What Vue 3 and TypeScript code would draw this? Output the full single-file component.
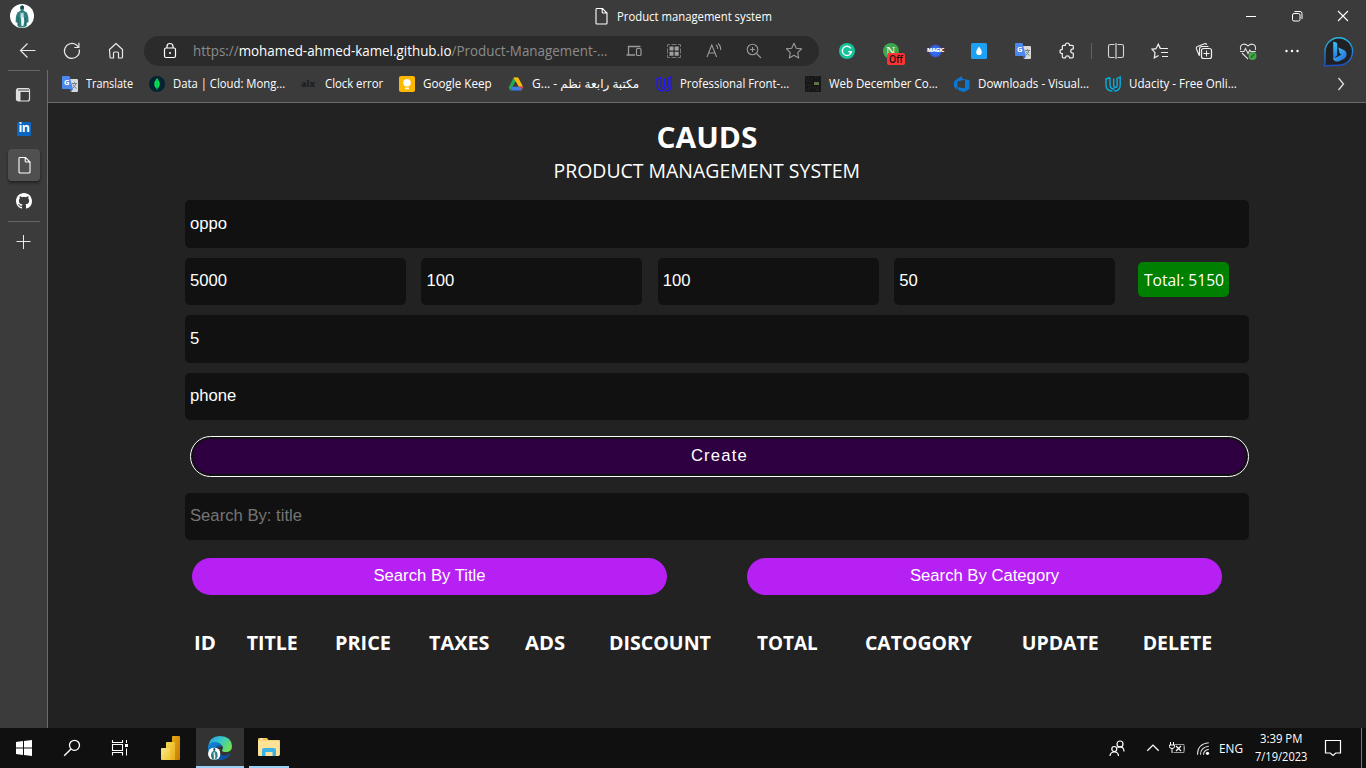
<script setup lang="ts">
import { computed, ref } from 'vue'
import type { Directive } from 'vue'

// Condenses or widens a label so that it takes exactly the given width.
const vFit: Directive<HTMLElement, number> = {
  mounted(el, binding) {
    const natural = el.offsetWidth
    if (natural > 0) el.style.transform = `scaleX(${binding.value / natural})`
  },
}

interface Bookmark { icon: string; label: string; width: number; ink: number; rtl?: boolean }

const bookmarks: Bookmark[] = [
  { icon: 'translate', label: 'Translate', width: 47, ink: 47 },
  { icon: 'mongo', label: 'Data | Cloud: Mong...', width: 112, ink: 112 },
  { icon: 'alx', label: 'Clock error', width: 58, ink: 58.5 },
  { icon: 'keep', label: 'Google Keep', width: 69, ink: 69 },
  { icon: 'drive', label: 'مكتبة رابعة نظم - G...\u200e', width: 108, ink: 107, rtl: true },
  { icon: 'udacity-blue', label: 'Professional Front-...', width: 109, ink: 109 },
  { icon: 'webdec', label: 'Web December Co...', width: 109, ink: 109 },
  { icon: 'azure', label: 'Downloads - Visual...', width: 111, ink: 111 },
  { icon: 'udacity-cyan', label: 'Udacity - Free Onli...', width: 108, ink: 108 },
]

// Lettering that sits on top of a logo.
const lettering: Record<string, string> = {
  norton: 'N',
  magic: 'MAGIC',
  alx: 'alx',
  translate: 'G',
  'translate-ext': 'G',
}

const navIcons = ['back', 'reload', 'home']
const addressIcons = ['devices', 'apps', 'read', 'zoom', 'star']
const extensions = ['grammarly', 'norton', 'magic', 'drop', 'translate-ext', 'puzzle']
const tools = ['split', 'favorites', 'collections', 'health', 'more']
const windowIcons = ['minimize', 'restore', 'close']

const title = ref('oppo')
const price = ref('5000')
const taxes = ref('100')
const ads = ref('100')
const discount = ref('50')
const count = ref('5')
const category = ref('phone')
const search = ref('')
const mode = ref<'title' | 'category'>('title')
const total = computed(() => +price.value + +taxes.value + +ads.value - +discount.value)

const headers: { label: string; width: number }[] = [
  { label: 'ID', width: 22 },
  { label: 'TITLE', width: 51 },
  { label: 'PRICE', width: 56 },
  { label: 'TAXES', width: 60 },
  { label: 'ADS', width: 40.5 },
  { label: 'DISCOUNT', width: 101.5 },
  { label: 'TOTAL', width: 61 },
  { label: 'CATOGORY', width: 106.5 },
  { label: 'UPDATE', width: 77 },
  { label: 'DELETE', width: 70 },
]
</script>

<template>
  <div class="screen">
    <svg class="sprite" width="0" height="0" aria-hidden="true">
      <defs>
        <linearGradient id="gBing" x1="0" y1="0" x2="1" y2="1"><stop offset="0" stop-color="#45cdf2" /><stop offset="1" stop-color="#1f62dc" /></linearGradient>
        <linearGradient id="gStem" x1="0" y1="0" x2="0" y2="1"><stop offset="0" stop-color="#3cc4f2" /><stop offset="1" stop-color="#2377e6" /></linearGradient>
        <linearGradient id="gRing" x1="0" y1="0" x2="0" y2="1"><stop offset="0" stop-color="#2bb6e4" /><stop offset="1" stop-color="#1d4fc4" /></linearGradient>
        <linearGradient id="gEdgeTop" x1="0" y1="0" x2="1" y2=".5"><stop offset="0" stop-color="#249be0" /><stop offset=".5" stop-color="#35c6d0" /><stop offset="1" stop-color="#6be05a" /></linearGradient>
        <linearGradient id="gEdgeLow" x1="0" y1="0" x2="1" y2="1"><stop offset="0" stop-color="#1389dc" /><stop offset="1" stop-color="#114a9a" /></linearGradient>
        <radialGradient id="gMagic"><stop offset="0" stop-color="#4063ff" /><stop offset=".65" stop-color="#296be8" /><stop offset="1" stop-color="#4b46b8" /></radialGradient>
        <linearGradient id="gBar1" x1="0" y1="0" x2="1" y2="1"><stop offset="0" stop-color="#e9aa12" /><stop offset="1" stop-color="#c27a04" /></linearGradient>
        <linearGradient id="gBar2" x1="0" y1="0" x2="1" y2="1"><stop offset="0" stop-color="#f8d94f" /><stop offset="1" stop-color="#e7ad1c" /></linearGradient>
        <linearGradient id="gBar3" x1="0" y1="0" x2="1" y2="1"><stop offset="0" stop-color="#fbe68a" /><stop offset="1" stop-color="#f1c733" /></linearGradient>
      </defs>

      <symbol id="avatar" viewBox="0 0 24 24">
        <circle cx="12" cy="12" r="12" fill="#fff" />
        <path d="M10.3 2.6q1.5-2 3.4-.6 1.2 2-.2 4.6l3.6 2.2q1.9 4.6 1.5 9.2l-1.9 1v3q-2.2 1.6-6 1.6-2.2-.4-3-1.6l.1-3-2.1-1q-.2-6.4 1.8-9.6l3.3-2q-1.100-2-.5-3.800z" fill="#327f80" />
        <path d="M10.600 8.200l1.300 1.300 1.500-1.300.3 4-1.700 6-1.500-5z" fill="#c7e0df" />
        <path d="M10.500 2.500q2-2 3.400.2l-.4 2.100-2.800.1z" fill="#16494c" />
        <path d="M8 13v9M15.500 14v7" fill="none" stroke="#205a5c" stroke-width=".7" />
        <path d="M11.200 20l.2-6 2.400-1.200.4 4.700-.8 4.500h-1.800z" fill="#eef6f5" />
      </symbol>

      <symbol id="page" viewBox="0 0 24 24">
        <path d="M7.500 4.500h6l4.500 4.500v10q0 1-1 1h-9q-1 0-1-1v-13.500q0-1 .5-1zM13.200 4.500v3.500q0 1 1 1h3.800" fill="none" stroke="#fff" stroke-width="1.100" />
      </symbol>
      <symbol id="minimize" viewBox="0 0 24 24"><path d="M7 12.500h10" stroke="#fff" /></symbol>
      <symbol id="restore" viewBox="0 0 24 24">
        <rect x="7.500" y="9.500" width="7.500" height="7.500" rx="1.500" fill="none" stroke="#fff" /><path d="M9.500 7.500h5.500q2 0 2 2v5.500" fill="none" stroke="#fff" />
      </symbol>
      <symbol id="close" viewBox="0 0 24 24"><path d="M7 7l10 10M17 7L7 17" stroke="#fff" stroke-width="1.100" /></symbol>

      <symbol id="back" viewBox="0 0 24 24"><path d="M19.500 11.500H4.500M11.500 4.500l-7 7 7 7" fill="none" stroke="#e8e8e8" stroke-width="1.200" /></symbol>
      <symbol id="reload" viewBox="0 0 24 24"><path d="M19.300 10.500A7.500 7.500 0 1 1 16.500 6l2.300 2.300M18.900 3.800v4.700h-4.700" fill="none" stroke="#e8e8e8" stroke-width="1.200" /></symbol>
      <symbol id="home" viewBox="0 0 24 24"><path d="M5.500 10.500l6.500-6 6.500 6v7.500q0 1-1 1h-3v-5q0-1-1-1h-3q-1 0-1 1v5h-2.500q-1 0-1-1z" fill="none" stroke="#e8e8e8" stroke-width="1.200" stroke-linejoin="round" /></symbol>
      <symbol id="lock" viewBox="0 0 24 24"><rect x="6.500" y="9" width="11" height="9.500" rx="1.500" fill="none" stroke="#fff" stroke-width="1.200" /><path d="M9 9V7.500q0-3 3-3t3 3V9" fill="none" stroke="#fff" stroke-width="1.200" /><circle cx="12" cy="14" r="1" fill="#fff" /></symbol>

      <symbol id="devices" viewBox="0 0 24 24"><path d="M18.500 7.500H6.500v8M4.500 16h8.500" fill="none" stroke="#9a9a9a" stroke-width="1.300" /><rect x="14.500" y="9.500" width="4.500" height="7" rx="1" fill="#2b2b2b" stroke="#9a9a9a" stroke-width="1.200" /></symbol>
      <symbol id="apps" viewBox="0 0 24 24">
        <path d="M8 5.500H5.500V8M16 5.500h2.500V8M8 18.500H5.500V16M16 18.500h2.500V16M9.500 5.500h5M9.500 18.500h5M5.500 9.500v5M18.500 9.500v5" fill="none" stroke="#777" /><path d="M7.500 7.500h4v4h-4zM12.700 7.500h4v4h-4zM7.500 12.700h4v4h-4zM12.700 12.700h4v4h-4z" fill="#a0a0a0" />
      </symbol>
      <symbol id="read" viewBox="0 0 24 24"><path d="M5 18L9.800 6l4.800 12M6.700 14h6.200M14 6q2 1.500 1.700 4M16 4.500q3 2.500 2.600 6.500" fill="none" stroke="#9a9a9a" stroke-width="1.100" /></symbol>
      <symbol id="zoom" viewBox="0 0 24 24"><circle cx="10.500" cy="10.500" r="5.300" fill="none" stroke="#9a9a9a" stroke-width="1.100" /><path d="M14.500 14.500l4.500 4.500M10.500 8v5M8 10.500h5" stroke="#9a9a9a" stroke-width="1.100" /></symbol>
      <symbol id="star" viewBox="0 0 24 24"><path d="M12 4.300l2.300 4.900 5.300.7-3.900 3.700 1 5.400-4.700-2.700L7.300 19l1-5.400-3.900-3.700 5.300-.7z" fill="none" stroke="#9a9a9a" stroke-width="1.100" stroke-linejoin="round" /></symbol>

      <symbol id="grammarly" viewBox="0 0 24 24"><circle cx="12" cy="12" r="8" fill="#15c39a" /><path d="M15.800 9.300A4.600 4.600 0 1 0 16.500 12.700h-3.300M14.700 14.800l1.800-2" fill="none" stroke="#fff" stroke-width="1.300" /></symbol>
      <symbol id="norton" viewBox="0 0 24 24"><circle cx="12" cy="12" r="8" fill="#3da74a" /></symbol>
      <symbol id="magic" viewBox="0 0 24 24"><circle cx="12.500" cy="12" r="6.500" fill="url(#gMagic)" /></symbol>
      <symbol id="drop" viewBox="0 0 24 24"><rect x="4" y="4" width="16" height="16" rx="1.500" fill="#1da1f5" /><path d="M12 7.500q2.800 3.500 2.800 5.800a2.800 2.800 0 0 1-5.600 0q0-2.300 2.800-5.800z" fill="#fff" /></symbol>
      <symbol id="translate" viewBox="0 0 16 16">
        <path d="M7 3h8q1 0 1 1v11q0 1-1 1H9z" fill="#d9d9d9" /><path d="M10 7.500h5M12.500 6v1.500M14 7.500q-.8 3-3.500 5M11 8.500q1.200 2.500 3.500 4" stroke="#71858c" fill="none" /><path d="M1 0h6.500l3.500 13H1q-1 0-1-1V1q0-1 1-1z" fill="#4d88ef" /><path d="M8 13h3l-2 3z" fill="#3569c8" />
      </symbol>
      <symbol id="translate-ext" viewBox="-4 -4 24 24"><use href="#translate" width="16" height="16" /></symbol>
      <symbol id="puzzle" viewBox="0 0 24 24"><path d="M7 7q0-1 1-1h2q.2-2.300 2.100-2.300T14.200 6H17q1 0 1 1v2.600q-2.600.2-2.600 2.200t2.600 2.300V17.500q0 1-1 1h-2.800q-.2-1.900-2-1.900t-2.100 1.900H8q-1 0-1-1v-3.200q-2.300-.2-2.300-2.200T7 10z" fill="none" stroke="#f0f0f0" stroke-width="1.200" transform="translate(.3 .3)" /></symbol>
      <symbol id="split" viewBox="0 0 24 24"><path d="M10.500 5.500H6.300q-1.800 0-1.800 1.800v9.400q0 1.800 1.800 1.800h4.200M13.500 5.500h4.200q1.800 0 1.800 1.800v9.400q0 1.800-1.800 1.800h-4.200" fill="none" stroke="#d8d8d8" stroke-width="1.100" /><path d="M12 4v16" stroke="#d8d8d8" stroke-width="1.200" /></symbol>
      <symbol id="favorites" viewBox="0 0 24 24"><path d="M12.500 9.500h-.3L10.300 5.200 8 9.700l-4 .6 3 3.300-.7 5.200 4.300-2.300M10.300 5.200l2.200 4.300h1.500M12.500 9.500h7.500M13 13.500h7M14 17.500h6" fill="none" stroke="#f0f0f0" stroke-width="1.200" /></symbol>
      <symbol id="collections" viewBox="0 0 24 24"><path d="M8 16.500l-1-.5-2.500-6q-.7-2 1-2.500l7-2.700q1.500-.5 2.300 1M7.500 16V10q0-2.500 2.500-2.500h6.500" fill="none" stroke="#f0f0f0" stroke-width="1.100" /><rect x="9.500" y="9.500" width="10" height="10" rx="2" fill="#3b3b3b" stroke="#f0f0f0" stroke-width="1.200" /><path d="M14.500 11.500v6M11.500 14.500h6" stroke="#f0f0f0" /></symbol>
      <symbol id="health" viewBox="0 0 24 24"><path d="M4.800 11q-1.300-4 1.700-5.500 3-1.200 5.500 1.500 2.500-2.700 5.500-1.500 3 1.500 1.700 5.500M4 12.500h4l1.500-3 2.500 5 1.800-3.500 1 1.500h5M6 14l6 6" fill="none" stroke="#e0e0e0" stroke-width="1.100" /><circle cx="16.500" cy="17" r="4" fill="#42a548" /><path d="M14.800 18.700l3.400-3.400" stroke="#1e5c25" stroke-width="1.200" /></symbol>
      <symbol id="more" viewBox="0 0 24 24"><circle cx="6.500" cy="12" r="1.200" fill="#fff" /><circle cx="12" cy="12" r="1.200" fill="#fff" /><circle cx="17.500" cy="12" r="1.200" fill="#fff" /></symbol>
      <symbol id="bing" viewBox="0 0 32 32"><path d="M1.200 29.700q1-2 .8-5V15.500A13.800 13.800 0 1 1 15.700 29.300q-7 0-14.500.4z" fill="#202124" stroke="url(#gRing)" stroke-width="1.400" /><path d="M10.200 5.500l3 1q1 .4 1 1.500V19.500l-4 3.500z" fill="url(#gStem)" /><path d="M15.300 11.500l5.700 2.500q3.200 2 2.500 5.500-1 3-3.500 4l-3.500 1.600q-2.500 1-4.600 0-2-1.100-1.700-3.100 2 .2 4-1l4.300-2.500-1.800-1z" fill="url(#gBing)" /></symbol>

      <symbol id="mongo" viewBox="0 0 16 16"><circle cx="8" cy="8" r="8" fill="#022331" /><path d="M8 2q3 3.500 2.700 7-.3 2.300-2.700 4-2.400-1.700-2.700-4Q5 5.500 8 2z" fill="#08e65a" /><path d="M8 4v10" stroke="#05a845" stroke-width=".8" /></symbol>
      <symbol id="alx" viewBox="0 0 16 16"></symbol>
      <symbol id="keep" viewBox="0 0 16 16"><rect width="16" height="16" rx="2" fill="#fdb900" /><circle cx="8" cy="6.800" r="3.800" fill="#fff" /><path d="M6 11.600h4v1.600H6z" fill="#fff" /></symbol>
      <symbol id="drive" viewBox="0 0 16 16"><path d="M5.500 1.500h4.300L4.200 11.300 2.200 14.500 .8 11.500z" fill="#25a851" /><path d="M6 1.500h4.200l5 9.500h-4.500L6 2.500z" fill="#fdb907" /><path d="M4.500 10.500h10.700l-1.800 4H2.500z" fill="#3f7de8" /><path d="M11 10.500h4.200l-1.500 3.500z" fill="#e64337" /><path d="M8 6l2.500 4.500h-5z" fill="#3b3b3b" /></symbol>
      <symbol id="udacity" viewBox="0 0 16 16"><path d="M5 1.500L1 3V9.500Q1 14.500 7.500 15.200M5 1.500V9q0 4 4.500 4M8.700 2.500v7q0 1.900 1.700 1.900t1.700-1.900v-7L15.200 1v8.500q0 5-6.200 5.700" fill="none" stroke="currentColor" stroke-width="1.350" /></symbol>
      <symbol id="udacity-blue" viewBox="0 0 16 16"><use href="#udacity" color="#2015ff" width="16" height="16" /></symbol>
      <symbol id="udacity-cyan" viewBox="0 0 16 16"><use href="#udacity" color="#02b3e4" width="16" height="16" /></symbol>
      <symbol id="webdec" viewBox="0 0 16 16"><rect width="16" height="16" fill="#171717" /><path d="M1 2h3M6 3h2M10 1h4M2 5h4M1 9h5M3 12h3M8 12h6M1 14h3M11 14h3" stroke="#353535" stroke-dasharray="1 1" /><path d="M9 7h5v2H9z" fill="#5d763a" /><path d="M9 6.500h5" stroke="#a6b98a" stroke-width=".5" /></symbol>
      <symbol id="azure" viewBox="0 0 16 16"><path d="M0 5.500L3.500 2.800 8 0v2.500l7.500 1.800V13L10 16l-5-1.500L2.500 11v3L0 10.500zM3.500 5.500v5.800l7.500 1V3.600z" fill="#0d78d4" fill-rule="evenodd" /></symbol>

      <symbol id="tabs" viewBox="0 0 24 24"><rect x="4.500" y="5.500" width="13" height="12.500" rx="2" fill="none" stroke="#e0e0e0" stroke-width="1.200" /><path d="M5 5.500h12v3.500H8.500v9H5z" fill="#e0e0e0" /><path d="M6 7h11" stroke="#3b3b3b" /></symbol>
      <symbol id="linkedin" viewBox="0 0 24 24"><rect x="5" y="5" width="14" height="14" rx="1" fill="#0a66c2" /></symbol>
      <symbol id="github" viewBox="0 0 16 16"><path fill="#fff" d="M8 0C3.580 0 0 3.580 0 8c0 3.540 2.290 6.530 5.470 7.590.4.070.55-.17.55-.38 0-.19-.01-.82-.01-1.490-2.010.37-2.530-.49-2.690-.94-.09-.23-.48-.94-.82-1.130-.28-.15-.68-.52-.01-.53.63-.01 1.080.58 1.230.82.72 1.210 1.870.87 2.330.66.07-.52.28-.87.51-1.070-1.780-.2-3.640-.89-3.640-3.950 0-.87.31-1.590.82-2.150-.08-.2-.36-1.020.08-2.120 0 0 .67-.21 2.200.82a7.600 7.600 0 0 1 4 0c1.530-1.040 2.200-.82 2.200-.82.44 1.100.16 1.920.08 2.120.51.56.82 1.270.82 2.150 0 3.070-1.870 3.750-3.650 3.950.29.25.54.73.54 1.480 0 1.070-.01 1.930-.01 2.200 0 .21.15.46.55.38A8.010 8.010 0 0 0 16 8c0-4.420-3.580-8-8-8z" /></symbol>
      <symbol id="plus" viewBox="0 0 24 24"><path d="M11.500 5v14M4.500 11.500h14" stroke="#e8e8e8" /></symbol>

      <symbol id="windows" viewBox="0 0 24 24"><path d="M4 6l7-.9v6.400H4zM12 5l8-1v7.500h-8zM4 12.500h7v6.400L4 18zM12 12.500h8V20l-8-1z" fill="#fff" /></symbol>
      <symbol id="find" viewBox="0 0 24 24"><circle cx="14.500" cy="9.300" r="5" fill="none" stroke="#fff" stroke-width="1.300" /><path d="M11 13l-6.800 6.800" stroke="#fff" stroke-width="1.400" /></symbol>
      <symbol id="taskview" viewBox="0 0 24 24"><path d="M4.500 4v2.500h10V4M4.500 19.500v-3h10v3" fill="none" stroke="#fff" stroke-width="1.100" /><path d="M4.500 8.500h10v6h-10z" fill="none" stroke="#fff" stroke-width="1.100" /><path d="M18.500 4v3M18.500 12.500v7" stroke="#fff" /><path d="M17 8h3v3h-3z" fill="#fff" /></symbol>
      <symbol id="powerbi" viewBox="0 0 24 24"><rect x="12" y="0" width="8" height="24" rx="1" fill="url(#gBar1)" /><path d="M7 6h7q1 0 1 1v17H6V7q0-1 1-1z" fill="url(#gBar2)" /><path d="M2 12h7q1 0 1 1v11H2q-1 0-1-1V13q0-1 1-1z" fill="url(#gBar3)" /></symbol>
      <symbol id="edge" viewBox="0 0 24 24">
        <path d="M0 11Q1.500 0 12 0q11.500.5 12 10 0 6-6 6-4.500 0-4-2 2-2 0-4.500Q8 4 0 11z" fill="url(#gEdgeTop)" />
        <path d="M0 11q1-5 6.500-5 6 0 7.500 4.500-4-1-4.500 2.500 0 5.500 6 7 4 0 7-2-4 6-10.500 6Q0 23 0 11z" fill="url(#gEdgeLow)" />
        <path d="M9.500 12q-1 5 4 7.500 5 1 8-2l.7.600Q18 24 11 22.500 5 18 7.300 11.500 10 8 13.500 10q-3.500-1-4 2z" fill="#0c53a6" />
        <use href="#avatar" x="0" y="11.500" width="12.500" height="12.500" />
      </symbol>
      <symbol id="explorer" viewBox="0 0 24 24"><path d="M2 3h8l1.500 2H22q1 0 1 1v14H1V4z" fill="#f5c451" /><path d="M1 5.500h21.500V20q0 1-1 1H2q-1 0-1-1z" fill="#fee298" /><path d="M5 21v-6q0-2 2-2h10q2 0 2 2v6h-3.500v-4h-7v4z" fill="#3bb1e5" /><path d="M3 4h3" stroke="#fff" /></symbol>
      <symbol id="people" viewBox="0 0 24 24"><circle cx="15" cy="8" r="3" fill="none" stroke="#fff" stroke-width="1.200" /><path d="M12.500 11.500q3-1.500 5.500.5 1 1.500 1 3.500" fill="none" stroke="#fff" stroke-width="1.200" /><circle cx="9.300" cy="13" r="2.500" fill="none" stroke="#fff" stroke-width="1.200" /><path d="M5 20q.3-4 4.300-4t4.200 4" fill="none" stroke="#fff" stroke-width="1.200" /></symbol>
      <symbol id="chevron-up" viewBox="0 0 24 24"><path d="M6.300 14.800l5.700-5.700 5.700 5.700" fill="none" stroke="#fff" stroke-width="1.300" /></symbol>
      <symbol id="battery" viewBox="0 0 24 24"><path d="M9.500 8.500h9.500v8H8.500M19.500 10.500v4" fill="none" stroke="#999" /><path d="M5.500 6v3M8.500 6v3M4.500 9h5v1.500q0 2-2.500 2t-2.500-2zM7 12.500v4.500" fill="none" stroke="#fff" /><path d="M11 10l5 5M16 10l-5 5" stroke="#fff" stroke-width="1.200" /></symbol>
      <symbol id="wifi" viewBox="0 0 24 24"><path d="M6.500 18Q6.500 7 17.800 6M9.500 18q0-7.500 8.300-8.500M12.500 18q0-4.500 5.300-5.500" fill="none" stroke="#ddd" stroke-width="1.100" transform="translate(0 .8)" /><circle cx="16.500" cy="17.300" r="1.600" fill="#fff" /></symbol>
      <symbol id="notice" viewBox="0 0 24 24"><path d="M4.500 4.500h15v12.500h-4.700L12 19.500 9.200 17H4.500z" fill="none" stroke="#fff" stroke-width="1.200" /></symbol>
      <symbol id="chevron-right" viewBox="0 0 24 24"><path d="M9.500 6l5 6-5 6" fill="none" stroke="#e0e0e0" stroke-width="1.300" /></symbol>
    </svg>

    <header class="titlebar">
      <div class="profile"><svg class="i24"><use href="#avatar" /></svg></div>
      <div class="tab-title">
        <svg class="i24"><use href="#page" /></svg>
        <span v-fit="154.5" class="fit">Product management system</span>
      </div>
      <div class="window-controls">
        <div v-for="icon in windowIcons" :key="icon" class="cell46"><svg class="i24"><use :href="`#${icon}`" /></svg></div>
      </div>
    </header>

    <div class="toolbar">
      <div v-for="icon in navIcons" :key="icon" class="cell44"><svg class="i24"><use :href="`#${icon}`" /></svg></div>
      <div class="address">
        <svg class="i24 lock"><use href="#lock" /></svg>
        <div class="url"><span v-fit="415" class="fit">https://<b>mohamed-ahmed-kamel.github.io</b>/Product-Management-...</span></div>
        <div v-for="icon in addressIcons" :key="icon" class="cell40"><svg class="i24"><use :href="`#${icon}`" /></svg></div>
      </div>
      <div v-for="icon in extensions" :key="icon" class="cell44 logo">
        <svg class="i24"><use :href="`#${icon}`" /></svg>
        <span v-if="lettering[icon]" class="lettering" :class="`on-${icon}`">{{ lettering[icon] }}</span>
        <span v-if="icon === 'norton'" class="badge"><span v-fit="14" class="fit">Off</span></span>
      </div>
      <i class="divider"></i>
      <div v-for="icon in tools" :key="icon" class="cell44"><svg class="i24"><use :href="`#${icon}`" /></svg></div>
      <div class="bing"><svg class="i32"><use href="#bing" /></svg></div>
    </div>

    <div class="body">
      <aside class="sidebar">
        <i class="rule"></i>
        <div class="side-cell tabs"><svg class="i24"><use href="#tabs" /></svg></div>
        <div class="side-cell logo"><svg class="i24"><use href="#linkedin" /></svg><span class="lettering on-linkedin">in</span></div>
        <div class="side-cell active"><svg class="i24"><use href="#page" /></svg></div>
        <div class="side-cell"><svg class="i16"><use href="#github" /></svg></div>
        <i class="rule second"></i>
        <div class="side-cell plus"><svg class="i24"><use href="#plus" /></svg></div>
      </aside>

      <div class="main">
        <nav class="bookmarks">
          <div v-for="mark in bookmarks" :key="mark.label" class="bookmark">
            <div class="logo">
              <svg class="i16"><use :href="`#${mark.icon}`" /></svg>
              <span v-if="lettering[mark.icon]" class="lettering" :class="`on-${mark.icon}`">{{ lettering[mark.icon] }}</span>
            </div>
            <div class="mark-label" :style="{ width: `${mark.width}px` }">
              <span v-fit="mark.ink" class="fit" :class="{ arabic: mark.rtl }" :dir="mark.rtl ? 'rtl' : 'ltr'">{{ mark.label }}</span>
            </div>
          </div>
          <svg class="i24 overflow"><use href="#chevron-right" /></svg>
        </nav>

        <main class="page">
          <div class="heading">
            <h1><span v-fit="101" class="fit">CAUDS</span></h1>
            <p><span v-fit="307" class="fit">PRODUCT MANAGEMENT SYSTEM</span></p>
          </div>

          <div class="form">
            <input v-model="title" class="field tall" placeholder="title" />
            <div class="price-row">
              <input v-model="price" class="field" placeholder="price" />
              <input v-model="taxes" class="field" placeholder="taxes" />
              <input v-model="ads" class="field" placeholder="ads" />
              <input v-model="discount" class="field" placeholder="discount" />
              <div class="total"><span v-fit="80" class="fit">Total: {{ total }}</span></div>
            </div>
            <input v-model="count" class="field tall" placeholder="count" />
            <input v-model="category" class="field" placeholder="category" />
            <button class="create">Create</button>
            <input v-model="search" class="field" :placeholder="`Search By: ${mode}`" />
            <div class="search-buttons">
              <button @click="mode = 'title'">Search By Title</button>
              <button @click="mode = 'category'">Search By Category</button>
            </div>
          </div>

          <div class="table-head">
            <div v-for="head in headers" :key="head.label"><span v-fit="head.width" class="fit">{{ head.label }}</span></div>
          </div>
        </main>
      </div>
    </div>

    <footer class="taskbar">
      <div class="task"><svg class="i24"><use href="#windows" /></svg></div>
      <div class="task"><svg class="i24"><use href="#find" /></svg></div>
      <div class="task"><svg class="i24"><use href="#taskview" /></svg></div>
      <div class="task powerbi"><svg class="i24"><use href="#powerbi" /></svg></div>
      <div class="task current"><svg class="i24"><use href="#edge" /></svg></div>
      <div class="task open"><svg class="i24"><use href="#explorer" /></svg></div>
      <div class="tray">
        <svg class="i24 people"><use href="#people" /></svg>
        <svg class="i24 up"><use href="#chevron-up" /></svg>
        <svg class="i24"><use href="#battery" /></svg>
        <svg class="i24 wifi"><use href="#wifi" /></svg>
        <div class="lang"><span v-fit="23.5" class="fit">ENG</span></div>
        <div class="clock">
          <div class="time"><span v-fit="42.5" class="fit">3:39 PM</span></div>
          <div class="date"><span v-fit="52.5" class="fit">7/19/2023</span></div>
        </div>
        <svg class="i24 notice"><use href="#notice" /></svg>
        <i class="show-desktop"></i>
      </div>
    </footer>
  </div>
</template>

<style>
body { margin: 0; overflow: hidden; background: #222; }
</style>

<style scoped>
* { box-sizing: border-box; }
.screen {
  width: 1366px; height: 768px; overflow: hidden;
  display: grid; grid-template-rows: 32px 38px 658px 40px;
  background: #3b3b3b; color: #fff;
  font-family: "Open Sans", "Noto Sans", sans-serif; font-size: 12px;
}
.sprite { position: absolute; }
svg { display: block; flex: none; overflow: visible; }
.i16 { width: 16px; height: 16px; }
.i24 { width: 24px; height: 24px; }
.i32 { width: 32px; height: 32px; }
.fit { display: inline-block; white-space: nowrap; transform-origin: 0 50%; }
.cell40, .cell44, .cell46 { flex: none; display: flex; justify-content: center; align-items: center; }
.cell40 { width: 40px; }
.cell44 { width: 44px; }
.cell46 { width: 46px; }

.logo { position: relative; }
.lettering { position: absolute; line-height: 1; font-weight: 700; white-space: nowrap; }
.on-norton { left: 17px; top: 5px; font: 400 13px/1 "Liberation Serif", serif; }
.on-magic { left: 14px; top: 9px; font-size: 5.500px; font-weight: 800; letter-spacing: -.4px; }
.on-translate-ext { left: 16px; top: 7px; font-size: 7.500px; }
.on-translate { left: 2px; top: 3px; font-size: 7.500px; }
.on-alx { left: 0; top: 3px; font-size: 9px; font-weight: 800; color: #1d2123; }
.on-linkedin { left: 10.500px; top: 10px; font-size: 12.500px; letter-spacing: -.5px; }
.badge {
  position: absolute; left: 18px; top: 14px; width: 18px; height: 12px; border-radius: 2px;
  background: #fa3434; color: #111; font-size: 11px; line-height: 12px; font-weight: 600; padding-left: 2px;
}

.titlebar { display: grid; grid-template-columns: 588px 1fr 138px; align-items: center; }
.profile { padding-left: 10px; }
.tab-title { display: flex; align-items: center; gap: 5px; padding-top: 1px; }
.tab-title svg { margin: -1px -1px 0 1px; }
.window-controls { display: flex; }

.toolbar { display: flex; align-items: center; padding-left: 6px; }
.address {
  flex: none; width: 675px; height: 30px; margin: 0 6px; border-radius: 15px;
  background: #2b2b2b; display: flex; align-items: center; padding-left: 14px;
}
.url { width: 421px; margin-left: 11px; font-size: 14px; color: #8c8c8c; line-height: 20px; }
.url b { color: #fff; font-weight: 400; }
.divider { width: 1px; height: 16px; margin: 0 2px; background: #606060; flex: none; }
.bing { width: 50px; display: flex; justify-content: center; padding-top: 1px; }

.body { display: grid; grid-template-columns: 48px 1fr; }
.sidebar { border-right: 1px solid #6b6b6b; display: flex; flex-direction: column; align-items: center; padding-left: 1px; }
.rule { width: 32px; height: 1px; background: #656565; flex: none; }
.side-cell { width: 32px; height: 36px; display: flex; justify-content: center; align-items: center; flex: none; }
.side-cell.tabs { margin-top: 6px; height: 35px; }
.side-cell.tabs + .side-cell { height: 34px; }
.side-cell.active { height: 32px; margin: 3px 0 2px; border-radius: 4px; background: #505050; box-shadow: 0 2px 3px #222; }
.rule.second { margin-top: 2px; }
.side-cell.plus { margin-top: 2px; }

.main { display: grid; grid-template-rows: 33px 1fr; min-width: 0; }
.bookmarks { border-bottom: 1px solid #6b6b6b; display: flex; gap: 16px; padding: 0 13px 4px 14px; align-items: center; }
.bookmark { display: flex; gap: 8px; align-items: center; flex: none; }
.mark-label { white-space: nowrap; line-height: 18px; height: 18px; }
.mark-label .arabic { font-family: "Open Sans", "DejaVu Sans", sans-serif; }
.overflow { margin-left: auto; }

.page { background: #222; }
.heading { height: 97px; padding-top: 14px; display: flex; flex-direction: column; align-items: center; }
h1, p { margin: 0; }
.heading .fit { transform-origin: 50% 50%; }
h1 { font-size: 29px; line-height: 40px; }
p { font-size: 19.500px; line-height: 28px; }

.form { width: 1064px; margin-left: 137px; display: flex; flex-direction: column; }
input, button { font-family: "Liberation Sans", Arial, sans-serif; font-size: 16.670px; color: #fff; outline: 0; border: 0; }
.field { display: block; width: 100%; height: 47px; padding: 0 5px 2px; margin: 0 0 10px; border-radius: 5px; background: #111; }
.field.tall { height: 48px; padding-bottom: 0; }
.field::placeholder { color: #757575; opacity: 1; }
.price-row { display: grid; grid-template-columns: repeat(4, 220.800px) 91px; column-gap: 15.600px; height: 57px; }
.total { margin: 4px 0 0 7.500px; width: 91px; height: 35px; border-radius: 5px; background: #008000; padding: 1px 6px 0; font-size: 16px; line-height: 35px; }
.create {
  height: 41px; margin: 6px 0 16px 5px; border: 1px solid #fff; border-radius: 21px;
  background: #2e0041; box-shadow: inset 0 0 0 2px #111; letter-spacing: 1.200px; padding: 0 0 2px;
}
.search-buttons { display: grid; grid-template-columns: 475px 475px; column-gap: 80px; margin: 8px 0 0 7px; }
.search-buttons button { height: 37px; border-radius: 19px; background: #b620f3; padding: 0 0 1px; }

.table-head {
  margin: 33px 0 0 145.700px; display: grid;
  grid-template-columns: 53px 88px 94px 96px 84px 148px 108px 157px 121px 80px;
  font-size: 19.500px; font-weight: 700; line-height: 30px;
}

.taskbar { background: #101010; display: flex; }
.task { width: 48px; display: flex; align-items: center; justify-content: center; flex: none; }
.task.powerbi { width: 52px; padding-left: 3px; }
.task.current { background: #333; border-bottom: 2px solid #9bd0f7; padding-top: 2px; }
.task.open { width: 40px; margin-left: 5px; border-bottom: 2px solid #9bd0f7; }
.tray { margin-left: auto; display: flex; align-items: center; }
.people { margin-right: 12px; }
.wifi { margin-left: 2px; }
.lang { width: 24px; margin-left: 4px; }
.clock { width: 53px; margin-left: 12px; line-height: 18px; }
.time { padding-left: 5px; }
.notice { margin-left: 13px; }
.show-desktop { width: 1px; align-self: stretch; background: #777; margin: 0 4px 0 16px; }
</style>
